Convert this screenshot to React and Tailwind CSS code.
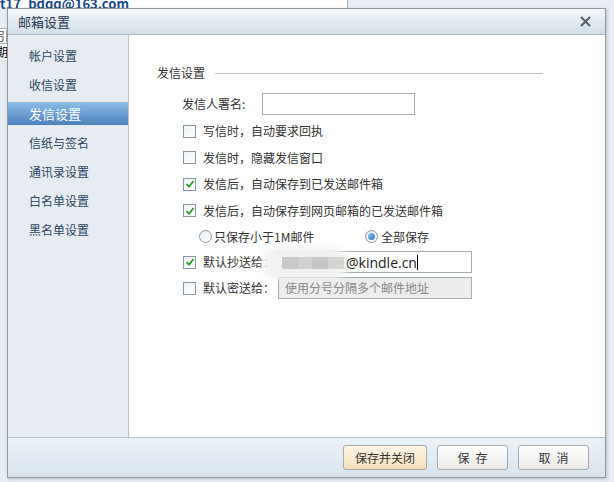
import React from "react";

const font = { fontFamily: '"Noto Sans CJK SC", "Microsoft YaHei", sans-serif' };

function Check({ checked }) {
  return (
    <span className="w-[13px] h-[13px] border border-[#8797a8] bg-gradient-to-br from-[#eef2f6] to-white flex items-center justify-center shrink-0">
      {checked && (
        <svg width="10" height="10" viewBox="0 0 10 10">
          <path d="M1.5 5.2 L4 7.6 L8.6 2" fill="none" stroke="#2f9a2f" strokeWidth="1.8" />
        </svg>
      )}
    </span>
  );
}

function Radio({ checked }) {
  return (
    <span className="w-[13px] h-[13px] rounded-full border border-[#8797a8] bg-gradient-to-br from-[#e6ebf0] to-white flex items-center justify-center shrink-0">
      {checked && <span className="w-[7px] h-[7px] rounded-full bg-gradient-to-br from-[#8ec2ef] to-[#2a78c8]" />}
    </span>
  );
}

const navItems = ["帐户设置", "收信设置", "发信设置", "信纸与签名", "通讯录设置", "白名单设置", "黑名单设置"];

export default function App() {
  return (
    <div className="relative w-[614px] h-[482px] overflow-hidden bg-[#e7edf3] text-[12px]" style={font}>
      {/* background page */}
      <div className="flex h-[9px]">
        <div className="w-[348px] bg-white border-r border-[#a0a8b0] overflow-hidden">
          <div className="text-[13px] font-bold text-[#1a4a8a] leading-none -mt-[3px]">t17_bdqq@163.com</div>
        </div>
        <div className="flex-1 bg-[#e7edf3]" />
      </div>
      <div className="flex flex-col w-[10px] mt-[19px]">
        <div className="h-[16px] bg-white border-y border-[#b0b8c0] text-[12px] leading-[14px] text-[#555] -ml-[3px]">引</div>
        <div className="h-[16px] bg-white text-[12px] leading-[16px] text-black -ml-[4px]">期</div>
      </div>

      {/* dialog */}
      <div className="absolute left-[7px] top-[8px] w-[599px] h-[470px] border border-[#8c9aa6] bg-[#f5f8fb] shadow-[1px_1px_3px_rgba(0,0,0,0.2)] flex flex-col">
        <div className="h-[26px] shrink-0 bg-gradient-to-b from-[#f3f6f9] to-[#d3dee8] border-b border-[#a9b7c4] flex items-center justify-between pl-[10px] pr-[14px]">
          <span className="text-[13px] text-[#1f3550]">邮箱设置</span>
          <svg width="11" height="11" viewBox="0 0 11 11">
            <path d="M1 1 L10 10 M10 1 L1 10" stroke="#56606a" strokeWidth="2" />
          </svg>
        </div>

        <div className="flex flex-1 min-h-0">
          <div className="w-[121px] shrink-0 bg-[#e6ecf1] border-r border-[#b7c3cd] pt-[9px]">
            {navItems.map((t, i) =>
              i === 2 ? (
                <div key={t} className="h-[23px] mb-[6px] bg-gradient-to-b from-[#8dbde8] to-[#4c82bd] text-white text-[13px] flex items-center pl-[21px]">
                  {t}
                </div>
              ) : (
                <div key={t} className="h-[23px] mb-[6px] text-[#2b4563] text-[12px] flex items-center pl-[21px]">
                  {t}
                </div>
              )
            )}
          </div>

          <div className="flex-1 bg-white pl-[28px] pt-[30px] text-[#333]">
            <div className="flex items-center gap-[10px] h-[16px]">
              <span>发信设置</span>
              <span className="w-[328px] h-px bg-[#b8c2cc]" />
            </div>

            <div className="flex items-center mt-[12px] ml-[25px] h-[22px]">
              <span className="w-[80px]">发信人署名:</span>
              <span className="w-[153px] h-[22px] border border-[#a4adb6] bg-white" />
            </div>

            <div className="ml-[26px] mt-[3px] flex flex-col">
              <div className="flex items-center gap-[7px] h-[26px]"><Check /><span>写信时，自动要求回执</span></div>
              <div className="flex items-center gap-[7px] h-[27px]"><Check /><span>发信时，隐藏发信窗口</span></div>
              <div className="flex items-center gap-[7px] h-[26px]"><Check checked /><span>发信后，自动保存到已发送邮件箱</span></div>
              <div className="flex items-center gap-[7px] h-[27px]"><Check checked /><span>发信后，自动保存到网页邮箱的已发送邮件箱</span></div>
              <div className="flex items-center h-[25px] pl-[16px]">
                <div className="flex items-center gap-[2px] w-[166px]"><Radio /><span>只保存小于1M邮件</span></div>
                <div className="flex items-center gap-[3px]"><Radio checked /><span>全部保存</span></div>
              </div>
              <div className="flex items-center h-[26px]">
                <Check checked />
                <span className="ml-[7px] w-[75px]">默认抄送给：</span>
                <div className="relative w-[194px] h-[22px] border border-[#a4adb6] bg-white flex items-center">
                  <div className="absolute -left-[17px] -top-[5px] w-[86px] h-[32px] rounded-full bg-[#f2f2f2] blur-[3px]" />
                  <div className="absolute left-[3px] top-[5px] w-[62px] h-[12px] flex">
                    <span className="w-[16px] bg-[#c9c9c9]" />
                    <span className="w-[14px] bg-[#d2d2d2]" />
                    <span className="w-[16px] bg-[#c6c6c6]" />
                    <span className="w-[16px] bg-[#d4d4d4]" />
                  </div>
                  <span className="ml-[67px] text-[14px] text-[#222] relative" style={{ fontFamily: '"Open Sans", "Noto Sans", sans-serif' }}>@kindle.cn</span>
                  <span className="w-px h-[15px] bg-black relative" />
                </div>
              </div>
              <div className="flex items-center h-[26px]">
                <Check />
                <span className="ml-[7px] w-[75px]">默认密送给：</span>
                <div className="w-[194px] h-[22px] border border-[#a4adb6] bg-[#ececec] flex items-center pl-[6px] text-[#888]">
                  使用分号分隔多个邮件地址
                </div>
              </div>
            </div>
          </div>
        </div>

        <div className="h-[40px] shrink-0 border-t border-[#b4c0cb] bg-gradient-to-b from-[#ebf1f7] to-[#d8e3ec] flex items-center justify-end gap-[10px] pr-[16px]">
          <button className="w-[84px] h-[25px] rounded-[3px] border border-[#a8a8a8] bg-gradient-to-b from-[#fdf5e6] to-[#f6dfb8] text-[#333] text-[12px]">保存并关闭</button>
          <button className="w-[71px] h-[25px] rounded-[3px] border border-[#a8a8a8] bg-gradient-to-b from-white to-[#e9e9e9] text-[#333] text-[12px] tracking-[6px] pl-[6px]">保存</button>
          <button className="w-[71px] h-[25px] rounded-[3px] border border-[#a8a8a8] bg-gradient-to-b from-white to-[#e9e9e9] text-[#333] text-[12px] tracking-[6px] pl-[6px]">取消</button>
        </div>
      </div>
    </div>
  );
}
